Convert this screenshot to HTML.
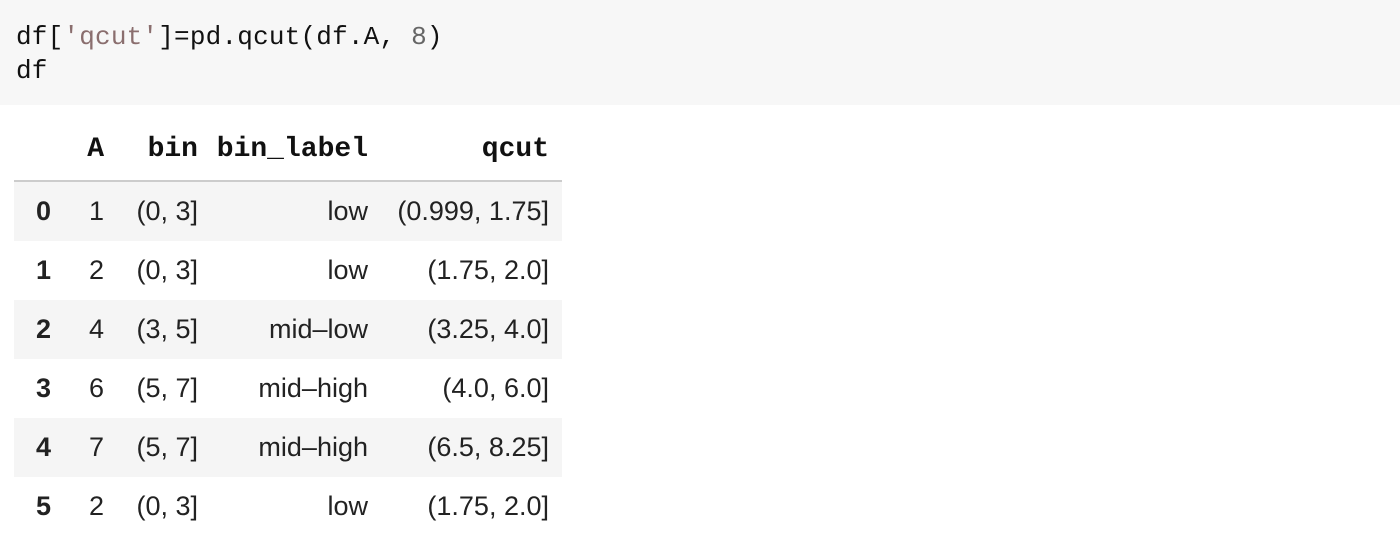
<!DOCTYPE html><html><head><style>
body{margin:0;width:1400px;height:530px;background:#fff;overflow:hidden;position:relative;font-family:"Liberation Sans",sans-serif}
.code{position:absolute;left:0;top:0;width:1400px;height:105px;background:#f7f7f7;font-family:"Liberation Mono",monospace;font-size:26px;letter-spacing:0.2px;color:#111}
.code div{position:absolute;left:16px;white-space:pre}
.s{color:#8a6e6e}.n{color:#666}
.h{position:absolute;top:134px;font-family:"Liberation Mono",monospace;font-weight:bold;font-size:28px;color:#111}
.line{position:absolute;left:14px;top:180px;width:548px;height:2px;background:#ccc}
.row{position:absolute;left:14px;width:548px;height:59px;font-size:27px;color:#222}
.row.g{background:#f5f5f5}
.row span{position:absolute;top:14px;white-space:nowrap}
</style></head><body>
<div class="code"><div style="top:22px">df[<span class="s">'qcut'</span>]=pd.qcut(df.A, <span class="n">8</span>)</div><div style="top:56px">df</div></div>
<div class="h" style="right:1296px">A</div>
<div class="h" style="right:1202px">bin</div>
<div class="h" style="right:1032px">bin_label</div>
<div class="h" style="right:851px">qcut</div>
<div class="line"></div>
<div class="row g" style="top:182px"><span style="left:22px;font-weight:bold">0</span><span style="right:458px">1</span><span style="right:364px">(0, 3]</span><span style="right:194px">low</span><span style="right:13px">(0.999, 1.75]</span></div>
<div class="row" style="top:241px"><span style="left:22px;font-weight:bold">1</span><span style="right:458px">2</span><span style="right:364px">(0, 3]</span><span style="right:194px">low</span><span style="right:13px">(1.75, 2.0]</span></div>
<div class="row g" style="top:300px"><span style="left:22px;font-weight:bold">2</span><span style="right:458px">4</span><span style="right:364px">(3, 5]</span><span style="right:194px">mid–low</span><span style="right:13px">(3.25, 4.0]</span></div>
<div class="row" style="top:359px"><span style="left:22px;font-weight:bold">3</span><span style="right:458px">6</span><span style="right:364px">(5, 7]</span><span style="right:194px">mid–high</span><span style="right:13px">(4.0, 6.0]</span></div>
<div class="row g" style="top:418px"><span style="left:22px;font-weight:bold">4</span><span style="right:458px">7</span><span style="right:364px">(5, 7]</span><span style="right:194px">mid–high</span><span style="right:13px">(6.5, 8.25]</span></div>
<div class="row" style="top:477px"><span style="left:22px;font-weight:bold">5</span><span style="right:458px">2</span><span style="right:364px">(0, 3]</span><span style="right:194px">low</span><span style="right:13px">(1.75, 2.0]</span></div>
</body></html>
